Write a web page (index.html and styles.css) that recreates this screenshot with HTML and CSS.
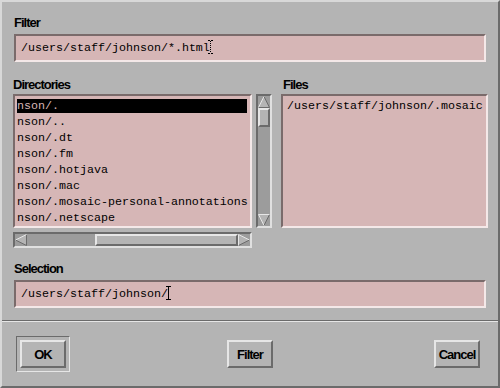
FILE: index.html
```html
<!DOCTYPE html>
<html lang="en">
<head>
  <meta charset="UTF-8">
  <title>File Selection</title>
  <link rel="stylesheet" href="styles.css">
</head>
<body>

<div class="dialog">
  <div class="work">
    <!-- Filter -->
    <div class="label label-top">Filter</div>
    <div class="field">/users/staff/johnson/*.html<svg class="cursor" width="5" height="14" viewBox="0 0 5 14"><path d="M0 0.5h2M3 0.5h2M2.5 1v1M2.5 3v1M2.5 5v1M2.5 7v1M2.5 9v1M2.5 11v1M0 13.5h2M3 13.5h2" stroke="#000" stroke-width="1"/></svg></div>

    <!-- Lists -->
    <div class="panes">
      <div class="pane-dirs">
        <div class="label">Directories</div>
        <div class="dir-wrap">
          <div class="list dirs">
            <div class="row selected">nson/.</div>
            <div class="row">nson/..</div>
            <div class="row">nson/.dt</div>
            <div class="row">nson/.fm</div>
            <div class="row">nson/.hotjava</div>
            <div class="row">nson/.mac</div>
            <div class="row">nson/.mosaic-personal-annotations</div>
            <div class="row">nson/.netscape</div>
          </div>
          <div class="vscroll">
            <svg class="arrow" width="12" height="12" viewBox="0 0 12 12"><polygon points="6,0.5 11.5,11.5 0.5,11.5" fill="#b4b4b4"/><path d="M6 0.5L11.5 11.5H0.5" stroke="#6b6b6b" fill="none"/><path d="M0.5 11.5L6 0.5" stroke="#e6e6e6" fill="none"/></svg>
            <div class="thumb thumb-v"></div>
            <div class="fill"></div>
            <svg class="arrow" width="12" height="12" viewBox="0 0 12 12"><polygon points="0.5,0.5 11.5,0.5 6,11.5" fill="#b4b4b4"/><path d="M11.5 0.5L6 11.5" stroke="#6b6b6b" fill="none"/><path d="M6 11.5L0.5 0.5H11.5" stroke="#e6e6e6" fill="none"/></svg>
          </div>
        </div>
        <div class="hscroll">
          <svg class="arrow" width="12" height="12" viewBox="0 0 12 12"><polygon points="0.5,6 11.5,0.5 11.5,11.5" fill="#b4b4b4"/><path d="M0.5 6L11.5 11.5V0.5" stroke="#6b6b6b" fill="none"/><path d="M11.5 0.5L0.5 6" stroke="#e6e6e6" fill="none"/></svg>
          <div class="fill fill-left"></div>
          <div class="thumb thumb-h"></div>
          <svg class="arrow" width="12" height="12" viewBox="0 0 12 12"><polygon points="0.5,0.5 11.5,6 0.5,11.5" fill="#b4b4b4"/><path d="M11.5 6L0.5 11.5" stroke="#6b6b6b" fill="none"/><path d="M0.5 11.5V0.5L11.5 6" stroke="#e6e6e6" fill="none"/></svg>
        </div>
      </div>

      <div class="pane-files">
        <div class="label label-files">Files</div>
        <div class="list files">
          <div class="row">/users/staff/johnson/.mosaic</div>
        </div>
      </div>
    </div>

    <!-- Selection -->
    <div class="label label-sel">Selection</div>
    <div class="field">/users/staff/johnson/<svg class="cursor" width="5" height="14" viewBox="0 0 5 14"><path d="M0 0.5h5M2.5 0v14M0 13.5h5" stroke="#000" stroke-width="1"/></svg></div>
  </div>

  <div class="sep"></div>

  <div class="actions">
    <div class="default-frame">
      <button class="btn">OK</button>
    </div>
    <button class="btn btn-filter">Filter</button>
    <button class="btn btn-cancel">Cancel</button>
  </div>
</div>

</body>
</html>
```

FILE: styles.css
```css
/* General styles */
body {
  margin: 0;
  font-family: "Liberation Sans", Arial, sans-serif;
}

/* Dialog window */
.dialog {
  width: 500px;
  height: 388px;
  box-sizing: border-box;
  background: #b4b4b4;
  border: 2px solid;
  border-color: #d8d8d8 #6b6b6b #6b6b6b #d8d8d8;
  display: flex;
  flex-direction: column;
}

.work {
  padding: 0 12px;
}

/* Labels */
.label {
  height: 14px;
  line-height: 14px;
  font-size: 13px;
  font-weight: bold;
  letter-spacing: -1px;
  color: #000;
}

.label-top {
  margin-top: 14px;
}

.label-sel {
  margin-top: 14px;
}

.label-files {
  padding-left: 2px;
}

/* Text fields */
.field {
  margin-top: 4px;
  height: 28px;
  box-sizing: border-box;
  background: #d6b6b6;
  border: 2px solid;
  border-color: #7a6b6b #f4e8e8 #f4e8e8 #7a6b6b;
  padding-left: 5px;
  font-family: "Liberation Mono", "Courier New", monospace;
  font-size: 11.67px;
  line-height: 24px;
  white-space: nowrap;
  color: #000;
}

.cursor {
  display: inline-block;
  vertical-align: -3px;
  margin-left: -2px;
}

/* List panes */
.panes {
  display: flex;
  margin: 16px -1px 0;
}

.pane-dirs {
  width: 259px;
}

.pane-files {
  flex: 1;
  margin-left: 9px;
}

.dir-wrap {
  display: flex;
  gap: 4px;
  margin-top: 2px;
}

.list {
  height: 134px;
  box-sizing: border-box;
  background: #d6b6b6;
  border: 2px solid;
  border-color: #7a6b6b #f4e8e8 #f4e8e8 #7a6b6b;
  padding: 3px 3px 0 2px;
  font-family: "Liberation Mono", "Courier New", monospace;
  font-size: 11.67px;
  overflow: hidden;
}

.files {
  margin-top: 2px;
  padding-left: 4px;
}

.dirs {
  width: 239px;
}

.row {
  height: 14px;
  line-height: 14px;
  margin-bottom: 2px;
  white-space: nowrap;
  color: #000;
}

.row.selected {
  background: #000;
  color: #d6b6b6;
}

/* Scrollbars */
.vscroll,
.hscroll {
  box-sizing: border-box;
  background: #9c9c9c;
  border: 2px solid;
  border-color: #6b6b6b #e0e0e0 #e0e0e0 #6b6b6b;
  display: flex;
}

.vscroll {
  width: 16px;
  height: 134px;
  flex-direction: column;
}

.hscroll {
  width: 239px;
  height: 16px;
  margin-top: 4px;
}

.arrow {
  display: block;
  flex: none;
}

.fill {
  flex: 1;
}

.fill-left {
  flex: none;
  width: 68px;
}

.thumb {
  box-sizing: border-box;
  background: #b4b4b4;
  border: 2px solid;
  border-color: #e6e6e6 #6b6b6b #6b6b6b #e6e6e6;
}

.thumb-v {
  height: 19px;
}

.thumb-h {
  flex: 1;
}

/* Separator */
.sep {
  margin-top: 12px;
  height: 1px;
  border-top: 1px solid #6b6b6b;
  background: #e6e6e6;
}

/* Buttons */
.actions {
  display: flex;
  align-items: flex-start;
  padding: 14px 0 0 14px;
}

.default-frame {
  border: 1px solid;
  border-color: #6b6b6b #e6e6e6 #e6e6e6 #6b6b6b;
  padding: 3px;
}

.btn {
  display: block;
  width: 46px;
  height: 28px;
  box-sizing: border-box;
  margin: 0;
  padding: 0;
  background: #b4b4b4;
  border: 2px solid;
  border-color: #e6e6e6 #6b6b6b #6b6b6b #e6e6e6;
  font-family: "Liberation Sans", Arial, sans-serif;
  font-size: 13px;
  font-weight: bold;
  letter-spacing: -1px;
  color: #000;
}

.btn-filter {
  margin-top: 4px;
  margin-left: 157px;
}

.btn-cancel {
  margin-top: 4px;
  margin-left: 161px;
}
```
